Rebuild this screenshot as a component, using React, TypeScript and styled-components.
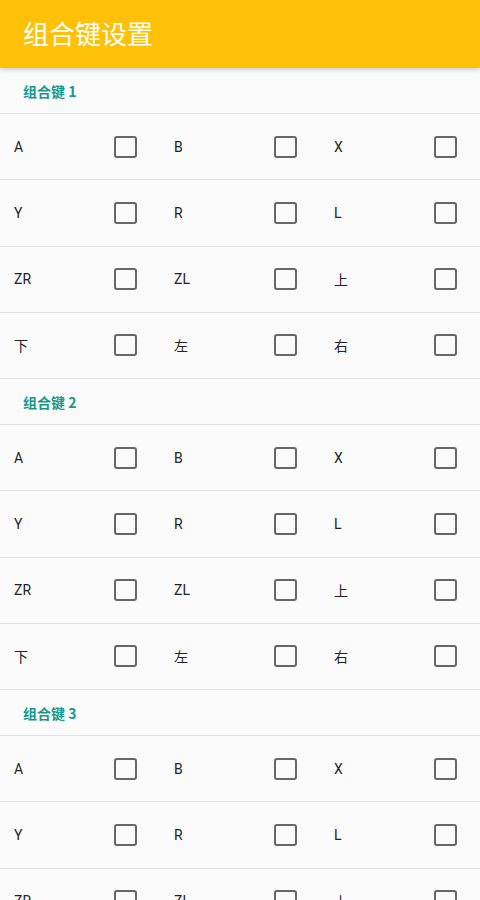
import * as React from "react";
import styled, { createGlobalStyle } from "styled-components";

const GlobalStyle = createGlobalStyle`
    html, body {
        margin: 0;
        padding: 0;
        background: #fafafa;
        font-family: Roboto, "Noto Sans", "Noto Sans CJK SC", sans-serif;
    }
`;

const Page = styled.div`
    width: 480px;
    min-height: 900px;
    background: #fafafa;
`;

const AppBar = styled.header`
    position: relative;
    z-index: 1;

    display: flex;
    align-items: center;

    height: 68px;
    padding: 0 23px 4px;
    box-sizing: border-box;

    background: #ffc107;
    box-shadow: 0 2px 4px rgba(0, 0, 0, 0.18);
`;

const Title = styled.h1`
    margin: 0;

    color: #ffffff;
    font-family: "Noto Sans CJK SC", sans-serif;
    font-size: 26px;
    font-weight: 400;
`;

const SectionHeader = styled.div`
    display: flex;
    align-items: center;

    height: 45px;
    padding: 0 23px;

    border-bottom: 1px solid #e3e3e3;
    color: #16998a;
    font-family: "Noto Sans CJK SC", sans-serif;
    font-size: 14px;
    font-weight: 700;
`;

const Row = styled.div`
    display: grid;
    grid-template-columns: repeat(3, 160px);

    height: 65.25px;

    border-bottom: 1px solid #e3e3e3;
`;

const Cell = styled.label`
    display: flex;
    align-items: center;

    padding-left: 14px;

    cursor: default;
`;

const Label = styled.span`
    width: 100px;

    color: #222222;
    font-family: Roboto, "Noto Sans CJK SC", sans-serif;
    font-size: 14px;
`;

const Box = styled.span<{ checked?: boolean }>`
    box-sizing: border-box;
    width: 23px;
    height: 22px;

    border: 2.5px solid #666666;
    border-radius: 3px;
    background: ${p => (p.checked ? "#666666" : "transparent")};
`;

const keys = [
    ["A", "B", "X"],
    ["Y", "R", "L"],
    ["ZR", "ZL", "上"],
    ["下", "左", "右"]
];

const Option = (props: { name: string }) => {
    const [checked, setChecked] = React.useState(false);
    return (
        <Cell onClick={() => setChecked(!checked)}>
            <Label>{props.name}</Label>
            <Box checked={checked} />
        </Cell>
    );
};

const Group = (props: { index: number }) => (
    <section>
        <SectionHeader>组合键 {props.index}</SectionHeader>
        {keys.map((row, i) => (
            <Row key={i}>
                {row.map(k => (
                    <Option key={k} name={k} />
                ))}
            </Row>
        ))}
    </section>
);

export default function App() {
    return (
        <Page>
            <GlobalStyle />
            <AppBar>
                <Title>组合键设置</Title>
            </AppBar>
            {[1, 2, 3].map(n => (
                <Group key={n} index={n} />
            ))}
        </Page>
    );
}
